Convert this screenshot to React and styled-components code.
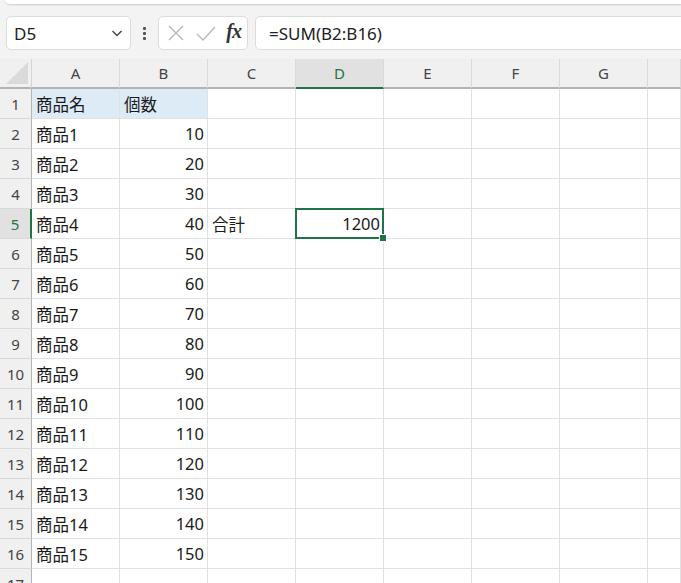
import React from "react";
import styled, { createGlobalStyle } from "styled-components";

const GlobalStyle = createGlobalStyle`
  html, body {
    margin: 0;
    padding: 0;
    background: #ffffff;
    overflow: hidden;
  }
  body {
    font-family: "Noto Sans", "Noto Sans CJK JP", sans-serif;
  }
`;

const COLUMNS = ["A", "B", "C", "D", "E", "F", "G", ""];
const ACCENT = "#217346";

const ROWS = [
  ["商品名", "個数"],
  ...Array.from({ length: 15 }, (_, i) => [`商品${i + 1}`, String((i + 1) * 10)]),
  ["", ""],
];

const Page = styled.div`
  width: 681px;
  height: 583px;
  overflow: hidden;
  background: #ffffff;
`;

const Toolbar = styled.div`
  background: #f3f3f3;
  height: 59px;
  box-sizing: border-box;
`;

const TopStrip = styled.div`
  height: 4px;
  margin-left: 5px;
  background: #ffffff;
  border-bottom: 1px solid #d6d6d6;
  border-bottom-left-radius: 6px;
  box-shadow: 0 1px 2px rgba(0, 0, 0, 0.06);
`;

const FormulaRow = styled.div`
  display: flex;
  align-items: center;
  padding: 11px 0 0 6px;
  height: 34px;
`;

const Box = styled.div`
  height: 34px;
  box-sizing: border-box;
  background: #ffffff;
  border: 1px solid #dcdcdc;
  border-radius: 5px;
  display: flex;
  align-items: center;
`;

const NameBox = styled(Box)`
  width: 125px;
  padding: 0 6px 0 7px;
  justify-content: space-between;
  font-size: 17px;
  color: #222;
`;

const Dots = styled.div`
  width: 27px;
  display: flex;
  flex-direction: column;
  align-items: center;
  gap: 2px;
  span {
    width: 3px;
    height: 3px;
    background: #555;
    border-radius: 1px;
  }
`;

const FxBox = styled(Box)`
  width: 90px;
  padding: 0 6px 0 8px;
  justify-content: space-between;
`;

const FxLabel = styled.span`
  font-family: "Liberation Serif", "DejaVu Serif", serif;
  font-style: italic;
  font-weight: bold;
  font-size: 20px;
  color: #333;
  letter-spacing: -1px;
  margin-top: -3px;
`;

const FormulaInput = styled(Box)`
  flex: 1;
  margin-left: 7px;
  margin-right: -10px;
  padding-left: 13px;
  font-size: 17px;
  color: #222;
`;

const Sheet = styled.div`
  display: grid;
  grid-template-columns: 32px repeat(7, 88px) 1fr;
  grid-auto-rows: 30px;
`;

const Corner = styled.div`
  background: #f0f0f0;
  border-right: 1px solid #d4d4d4;
  border-bottom: 2px solid #b4b4b4;
  display: flex;
  align-items: flex-end;
  justify-content: flex-end;
  padding: 0 3px 3px 0;
  box-sizing: border-box;
`;

const ColHeader = styled.div`
  background: ${({ $active }) => ($active ? "#e1e1e1" : "#f0f0f0")};
  color: ${({ $active }) => ($active ? ACCENT : "#444")};
  border-right: 1px solid #d9d9d9;
  border-bottom: 2px solid ${({ $active }) => ($active ? ACCENT : "#b4b4b4")};
  box-sizing: border-box;
  display: flex;
  align-items: center;
  justify-content: center;
  font-size: 15px;
`;

const RowHeader = styled.div`
  background: ${({ $active }) => ($active ? "#e1e1e1" : "#f0f0f0")};
  color: ${({ $active }) => ($active ? ACCENT : "#444")};
  border-right: ${({ $active }) => ($active ? `2px solid ${ACCENT}` : "1px solid #b4b4b4")};
  border-bottom: 1px solid #d9d9d9;
  box-sizing: border-box;
  display: flex;
  align-items: center;
  justify-content: center;
  font-size: 15px;
`;

const Cell = styled.div`
  position: relative;
  background: ${({ $fill }) => $fill || "#ffffff"};
  border-right: 1px solid #e1e1e1;
  border-bottom: 1px solid #e1e1e1;
  box-sizing: border-box;
  display: flex;
  align-items: center;
  justify-content: ${({ $align }) => ($align === "right" ? "flex-end" : "flex-start")};
  padding: 0 3px 0 4px;
  font-family: "Noto Sans", "Noto Sans CJK JP", sans-serif;
  font-size: 16.5px;
  color: #1a1a1a;
  white-space: nowrap;

  ${({ $selected }) =>
    $selected &&
    `
    &::after {
      content: "";
      position: absolute;
      top: -1px;
      left: -1px;
      right: -1px;
      bottom: -1px;
      border: 2px solid ${ACCENT};
      pointer-events: none;
    }
    &::before {
      content: "";
      position: absolute;
      right: -4px;
      bottom: -4px;
      width: 6px;
      height: 6px;
      background: ${ACCENT};
      border: 1px solid #fff;
      z-index: 2;
    }
  `}
`;

const Chevron = () => (
  <svg width="14" height="14" viewBox="0 0 14 14" fill="none">
    <path d="M2.5 5 L7 9.5 L11.5 5" stroke="#444" strokeWidth="1.4" />
  </svg>
);

const CrossIcon = () => (
  <svg width="18" height="18" viewBox="0 0 18 18" fill="none">
    <path d="M2 2 L16 16 M16 2 L2 16" stroke="#b8b8b8" strokeWidth="1.4" />
  </svg>
);

const CheckIcon = () => (
  <svg width="22" height="18" viewBox="0 0 22 18" fill="none">
    <path d="M2 10 L8 16 L20 3" stroke="#b8b8b8" strokeWidth="1.4" />
  </svg>
);

const CornerTriangle = () => (
  <svg width="22" height="22" viewBox="0 0 22 22">
    <polygon points="22,0 22,22 0,22" fill="#dadada" />
  </svg>
);

const cellFor = (rowIdx, colIdx) => {
  const data = ROWS[rowIdx];
  if (colIdx === 0) return { text: data[0] };
  if (colIdx === 1) return { text: data[1], align: rowIdx === 0 ? "left" : "right" };
  if (rowIdx === 4 && colIdx === 2) return { text: "合計" };
  if (rowIdx === 4 && colIdx === 3) return { text: "1200", align: "right", selected: true };
  return { text: "" };
};

export default function App() {
  return (
    <Page>
      <GlobalStyle />
      <Toolbar>
        <TopStrip />
        <FormulaRow>
          <NameBox>
            <span>D5</span>
            <Chevron />
          </NameBox>
          <Dots>
            <span />
            <span />
            <span />
          </Dots>
          <FxBox>
            <CrossIcon />
            <CheckIcon />
            <FxLabel>fx</FxLabel>
          </FxBox>
          <FormulaInput>=SUM(B2:B16)</FormulaInput>
        </FormulaRow>
      </Toolbar>
      <Sheet>
        <Corner>
          <CornerTriangle />
        </Corner>
        {COLUMNS.map((c, i) => (
          <ColHeader key={i} $active={c === "D"}>
            {c}
          </ColHeader>
        ))}
        {ROWS.map((_, r) => (
          <React.Fragment key={r}>
            <RowHeader $active={r === 4}>{r + 1}</RowHeader>
            {COLUMNS.map((_, c) => {
              const cell = cellFor(r, c);
              return (
                <Cell
                  key={c}
                  $align={cell.align}
                  $fill={r === 0 && c < 2 ? "#ddebf7" : null}
                  $selected={cell.selected}
                >
                  {cell.text}
                </Cell>
              );
            })}
          </React.Fragment>
        ))}
      </Sheet>
    </Page>
  );
}
